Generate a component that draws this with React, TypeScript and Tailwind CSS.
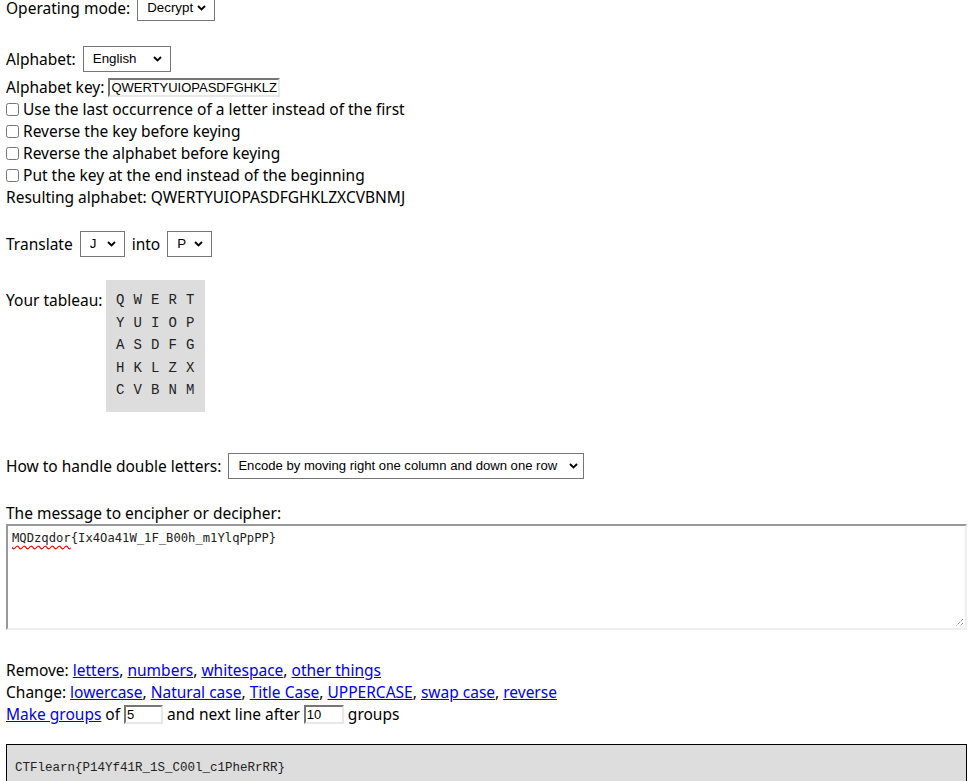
import React from "react";

const sans = { fontFamily: '"Noto Sans", "Open Sans", sans-serif' };
const arial = { fontFamily: '"Liberation Sans", Arial, sans-serif' };

function Chevron({ cr }: { cr: string }) {
  return (
    <svg
      className={`pointer-events-none absolute ${cr} top-1/2 -translate-y-1/2`}
      width="9"
      height="6"
      viewBox="0 0 9 6"
    >
      <path d="M1 1 L4.5 4.5 L8 1" fill="none" stroke="#000" strokeWidth="1.8" />
    </svg>
  );
}

function Sel({ value, w, cr = "right-[9px]", fs = "text-[13.33px]" }: { value: string; w: string; cr?: string; fs?: string }) {
  return (
    <span className={`relative inline-flex ${w} h-[26px]`}>
      <select
        defaultValue={value}
        className={`appearance-none w-full h-full border border-[#767676] bg-white pl-[9px] pr-[4px] ${fs} text-black`}
        style={arial}
      >
        <option>{value}</option>
      </select>
      <Chevron cr={cr} />
    </span>
  );
}

function Check({ label }: { label: string }) {
  return (
    <div className="flex items-center h-[22px]">
      <input type="checkbox" className="m-0 mr-[4px] w-[13px] h-[13px]" />
      <span>{label}</span>
    </div>
  );
}

function A({ children }: { children: React.ReactNode }) {
  return <a href="#" className="text-[#0000ee] underline">{children}</a>;
}

const inputCls =
  "ml-[4px] h-[19px] border-2 border-t-[#767676] border-l-[#767676] border-b-[#e8e8e8] border-r-[#e8e8e8] pl-[1px] pr-0 text-[13px] leading-none bg-white";

const rows = ["QWERT", "YUIOP", "ASDFG", "HKLZX", "CVBNM"];

export default function App() {
  return (
    <div
      className="bg-white text-black text-[15.5px] leading-[22px] pl-[6px] pr-[10px] h-[781px] overflow-hidden"
      style={sans}
    >
      <div className="mt-[-5px] flex items-center gap-[7px] h-[26px]">
        <span>Operating mode:</span>
        <Sel value="Decrypt" w="w-[78px]" />
      </div>

      <div className="mt-[25px] flex items-center gap-[7px] h-[26px]">
        <span>Alphabet:</span>
        <Sel value="English" w="w-[88px]" />
      </div>

      <div className="mt-[4px] flex items-center h-[22px]">
        <span>Alphabet key:</span>
        <input defaultValue="QWERTYUIOPASDFGHKLZ" className={`${inputCls} w-[172px]`} style={arial} />
      </div>
      <Check label="Use the last occurrence of a letter instead of the first" />
      <Check label="Reverse the key before keying" />
      <Check label="Reverse the alphabet before keying" />
      <Check label="Put the key at the end instead of the beginning" />
      <div className="h-[22px]">Resulting alphabet: QWERTYUIOPASDFGHKLZXCVBNMJ</div>

      <div className="mt-[23px] flex items-center h-[26px]">
        <span className="mr-[7px]">Translate</span>
        <Sel value="J" w="w-[45px]" />
        <span className="mx-[7px]">into</span>
        <Sel value="P" w="w-[45px]" />
      </div>

      <div className="mt-[23px] flex items-start">
        <span className="mt-[9px] mr-[4px]">Your tableau:</span>
        <div className="bg-[#dddddd] w-[99px] h-[132px] pl-[5px] pt-[9px]">
          {rows.map((r) => (
            <div key={r} className="flex h-[22.5px] items-center">
              {r.split("").map((c) => (
                <span
                  key={c}
                  className="w-[17.5px] text-center text-[14px] text-[#222]"
                  style={{ fontFamily: '"Liberation Mono", "Courier New", monospace' }}
                >
                  {c}
                </span>
              ))}
            </div>
          ))}
        </div>
      </div>

      <div className="mt-[41px] flex items-center gap-[7px] h-[26px]">
        <span>How to handle double letters:</span>
        <Sel
          value="Encode by moving right one column and down one row"
          w="w-[356px]"
          cr="right-[6px]"
          fs="text-[13.1px]"
        />
      </div>

      <div className="mt-[23px] h-[22px]">The message to encipher or decipher:</div>
      <div
        className="relative h-[106px] w-full border-2 border-t-[#999999] border-l-[#999999] border-b-[#eeeeee] border-r-[#eeeeee] bg-white pl-[4px] pt-[4px] text-[12.2px] leading-[16px] text-[#222]"
        style={{ fontFamily: '"DejaVu Sans Mono", "Liberation Mono", monospace' }}
      >
        <span className="underline decoration-wavy decoration-[#e00] underline-offset-[3px]">MQDzqdor</span>
        {"{Ix4Oa41W_1F_B00h_m1YlqPpPP}"}
        <svg className="absolute right-[1px] bottom-[1px]" width="10" height="10" viewBox="0 0 10 10">
          <path d="M9 2 L2 9 M9 6 L6 9" stroke="#666" strokeWidth="1" strokeDasharray="1 1" />
        </svg>
      </div>

      <div className="mt-[29px] h-[22px]">
        Remove: <A>letters</A>, <A>numbers</A>, <A>whitespace</A>, <A>other things</A>
      </div>
      <div className="h-[22px]">
        Change: <A>lowercase</A>, <A>Natural case</A>, <A>Title Case</A>, <A>UPPERCASE</A>, <A>swap case</A>,{" "}
        <A>reverse</A>
      </div>
      <div className="flex items-center h-[22px]">
        <A>Make groups</A>
        <span className="ml-[4px]">of</span>
        <input defaultValue="5" className={`${inputCls} w-[39px]`} style={arial} />
        <span className="ml-[4px]">and next line after</span>
        <input defaultValue="10" className={`${inputCls} w-[40px]`} style={arial} />
        <span className="ml-[4px]">groups</span>
      </div>

      <div
        className="mt-[19px] h-[60px] border border-black bg-[#dddddd] pl-[8px] pt-[14px] text-[12.5px] leading-[18px] text-[#222]"
        style={{ fontFamily: '"Liberation Mono", "Courier New", monospace' }}
      >
        CTFlearn{"{P14Yf41R_1S_C00l_c1PheRrRR}"}
      </div>
    </div>
  );
}
